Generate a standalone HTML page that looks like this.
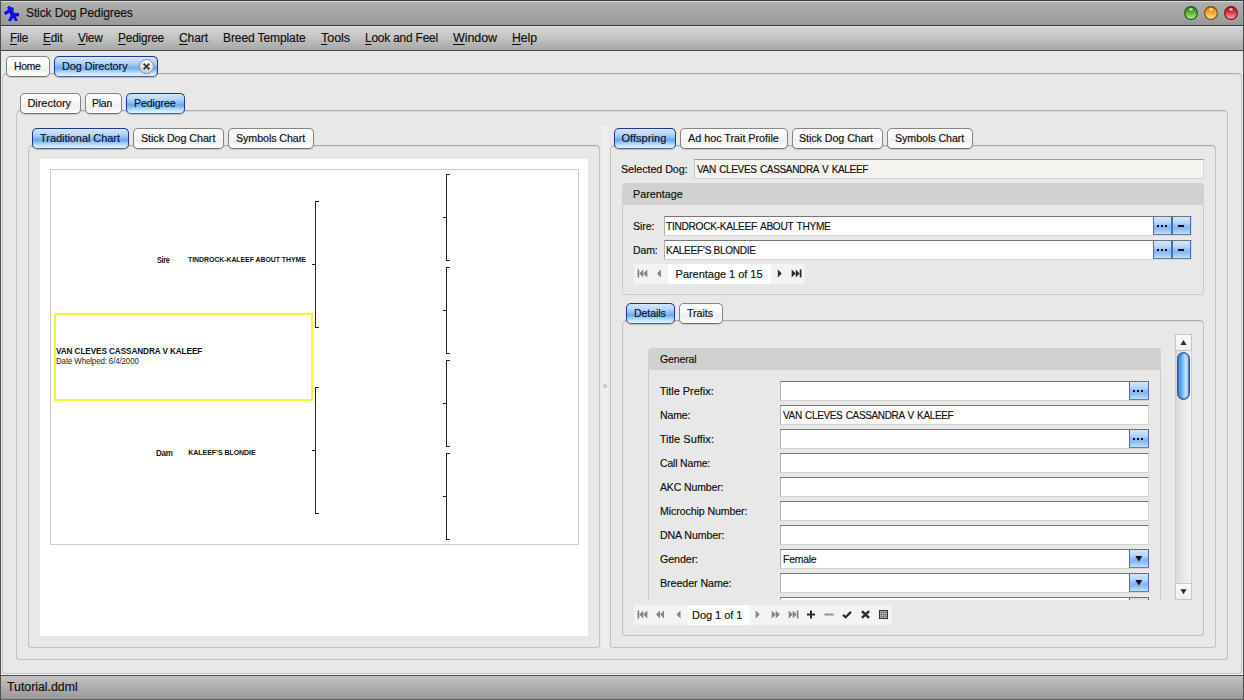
<!DOCTYPE html>
<html>
<head>
<meta charset="utf-8">
<title>Stick Dog Pedigrees</title>
<style>
*{box-sizing:border-box;margin:0;padding:0}
html,body{width:1244px;height:700px;overflow:hidden;background:#e8e8e8}
body{position:relative;font-family:"Liberation Sans",sans-serif;font-size:11px;color:#161616}
.a{position:absolute}
.t{position:absolute;white-space:nowrap;line-height:16px;height:16px;-webkit-text-stroke:0.17px currentColor}
.t u{text-decoration:underline;text-underline-offset:1.5px;text-decoration-thickness:1px}
#titlebar{left:0;top:0;width:1244px;height:26px;background:linear-gradient(#d8d8d8 0,#d8d8d8 1px,#aeaeae 1px,#a5a5a5 50%,#989898);border-top:1px solid #3c3c3c;border-bottom:1px solid #3a3a3a}
#menubar{left:0;top:26px;width:1244px;height:25px;background:linear-gradient(#e0e0e0 0,#e0e0e0 1px,#d2d2d2 1px,#c8c8c8 40%,#b4b4b4 75%,#a8a8a8);border-bottom:1px solid #484848}
#statusbar{left:0;top:675px;width:1244px;height:25px;background:linear-gradient(#c4c4c4,#adadad 50%,#989898);border-top:1px solid #4c4c4c;border-bottom:1px solid #606060}
#lb{left:0;top:0;width:1px;height:700px;background:#505050}
#rb{left:1243px;top:0;width:1px;height:700px;background:#505050}
.tab{position:absolute;height:21px;border:1px solid #858585;border-bottom-color:#6f6f6f;border-radius:5px;background:linear-gradient(#fefefe,#fafafa 40%,#efefef 58%,#f3f3f3 75%,#fdfdfd);box-shadow:0 1px 1px rgba(0,0,0,.14)}
.tab.sel{border-color:#20378a;border-bottom-color:#4f6488;background:radial-gradient(ellipse 60% 70% at 50% 50%,rgba(255,255,255,.22),rgba(255,255,255,0) 100%),linear-gradient(#cfe4fb 0%,#b4d5f8 25%,#86baf0 45%,#5fa1e9 58%,#88bff3 70%,#c0e3fc 86%,#dcf3ff 100%);box-shadow:0 1px 1px rgba(0,0,40,.2)}
.panel{position:absolute;border:1px solid #c3c3c3;border-top-color:#adadad;border-radius:5px 4px 3px 3px;background:#e8e8e8;box-shadow:inset 0 1px 0 #d9d9d9}
.field{position:absolute;height:20px;background:#fff;border:1px solid #d4d4d4;border-top-color:#767676;border-left-color:#b0b0b0}
.btn{position:absolute;width:19px;height:19px;border:1px solid #4c6eae;border-top-color:#727272;border-bottom-color:#667fa8;background:linear-gradient(#d3e7fb,#b5d5f7 35%,#84b5ee 58%,#8fc0f2 72%,#bfe0fa)}
.ghead{position:absolute;background:#d1d1d1;border-radius:4px 4px 0 0}
.nav{position:absolute;height:20px;background:#f3f3f3}
.navw{position:absolute;height:20px;background:#fff}
.bk{position:absolute;background:#242424}

</style>
</head>
<body>
<div id="titlebar" class="a"></div>
<div id="menubar" class="a"></div>

<!-- app icon (blue stick dog) -->
<svg class="a" style="left:0;top:0" width="24" height="26" viewBox="0 0 24 26">
 <path d="M8.1 6.4 L9.7 5.8 L10.6 7.4 L12.4 6.9 L13.7 8.2 L13.6 9.9 L13.2 11 L14.4 13 L19 13 L19.1 16.2 L15.7 16.4 L18 20.7 L14.9 20.9 L13 17.7 L11.4 21 L7.9 20.9 L10.6 15.4 L9.5 12.7 L5.6 14.9 L3.7 12.6 L8.2 9.6 L7.1 7.5 Z" fill="#1010ee"/>
</svg>

<!-- window buttons -->
<svg class="a" style="left:1180px;top:3px" width="62" height="20" viewBox="0 0 62 20">
 <defs>
  <linearGradient id="gg" x1="0" y1="0" x2="0" y2="1"><stop offset="0" stop-color="#2f7d1e"/><stop offset=".45" stop-color="#52b02f"/><stop offset="1" stop-color="#c2f59a"/></linearGradient>
  <linearGradient id="go" x1="0" y1="0" x2="0" y2="1"><stop offset="0" stop-color="#d9730f"/><stop offset=".45" stop-color="#f6a428"/><stop offset="1" stop-color="#ffe88e"/></linearGradient>
  <linearGradient id="gr" x1="0" y1="0" x2="0" y2="1"><stop offset="0" stop-color="#a9141f"/><stop offset=".45" stop-color="#dd3442"/><stop offset="1" stop-color="#ffb0b4"/></linearGradient>
  <radialGradient id="gl" cx="50%" cy="50%" r="50%"><stop offset="0" stop-color="#fff" stop-opacity=".95"/><stop offset="1" stop-color="#fff" stop-opacity="0"/></radialGradient>
 </defs>
 <circle cx="11" cy="10" r="6.4" fill="url(#gg)" stroke="#23541a" stroke-width="1.1"/><ellipse cx="11" cy="6.3" rx="2.6" ry="2" fill="url(#gl)"/>
 <circle cx="31" cy="10" r="6.4" fill="url(#go)" stroke="#7e4616" stroke-width="1.1"/><ellipse cx="31" cy="6.3" rx="2.6" ry="2" fill="url(#gl)"/>
 <circle cx="51" cy="10" r="6.4" fill="url(#gr)" stroke="#6c141c" stroke-width="1.1"/><ellipse cx="51" cy="6.3" rx="2.6" ry="2" fill="url(#gl)"/>
</svg>

<!-- LEVEL 1 panel + tabs -->
<div class="panel" style="left:2px;top:73px;width:1240px;height:601px"></div>
<div class="tab" style="left:6px;top:56px;width:44px"></div>
<div class="tab sel" style="left:54px;top:56px;width:104px"></div>
<svg class="a" style="left:138px;top:58px" width="17" height="17" viewBox="0 0 17 17">
 <defs><linearGradient id="cb" x1="0" y1="0" x2="0" y2="1"><stop offset="0" stop-color="#fafafa"/><stop offset="1" stop-color="#cfcfcf"/></linearGradient></defs>
 <circle cx="8.5" cy="8.5" r="7" fill="url(#cb)" stroke="#8c8c8c" stroke-width="1"/>
 <path d="M5.6 5.6 L11.4 11.4 M11.4 5.6 L5.6 11.4" stroke="#3a3a3a" stroke-width="1.9" stroke-linecap="butt"/>
</svg>

<!-- LEVEL 2 panel + tabs -->
<div class="panel" style="left:16px;top:110px;width:1212px;height:550px"></div>
<div class="tab" style="left:20px;top:93px;width:61px"></div>
<div class="tab" style="left:85px;top:93px;width:37px"></div>
<div class="tab sel" style="left:126px;top:93px;width:59px"></div>

<!-- LEFT panel -->
<div class="panel" style="left:28px;top:145px;width:572px;height:503px"></div>
<div class="tab sel" style="left:32px;top:128px;width:97px"></div>
<div class="tab" style="left:133px;top:128px;width:91px"></div>
<div class="tab" style="left:228px;top:128px;width:86px"></div>
<div class="a" style="left:40px;top:159px;width:548px;height:477px;background:#fff"></div>
<div class="a" style="left:50px;top:169px;width:529px;height:376px;border:1px solid #cdcdcd;background:#fff"></div>

<!-- chart: yellow box -->
<div class="a" style="left:54px;top:313px;width:259px;height:88px;border:2px solid #f3f33a"></div>
<!-- chart: brackets -->
<div class="bk" style="left:315px;top:201px;width:1px;height:127px"></div>
<div class="bk" style="left:315px;top:201px;width:4px;height:1px"></div>
<div class="bk" style="left:315px;top:327px;width:4px;height:1px"></div>
<div class="bk" style="left:312px;top:264px;width:3px;height:1px"></div>
<div class="bk" style="left:315px;top:387px;width:1px;height:127px"></div>
<div class="bk" style="left:315px;top:387px;width:4px;height:1px"></div>
<div class="bk" style="left:315px;top:513px;width:4px;height:1px"></div>
<div class="bk" style="left:312px;top:450px;width:3px;height:1px"></div>
<div class="bk" style="left:446px;top:174px;width:1px;height:87px"></div>
<div class="bk" style="left:446px;top:174px;width:4px;height:1px"></div>
<div class="bk" style="left:446px;top:260px;width:4px;height:1px"></div>
<div class="bk" style="left:443px;top:217px;width:3px;height:1px"></div>
<div class="bk" style="left:446px;top:267px;width:1px;height:87px"></div>
<div class="bk" style="left:446px;top:267px;width:4px;height:1px"></div>
<div class="bk" style="left:446px;top:353px;width:4px;height:1px"></div>
<div class="bk" style="left:443px;top:310px;width:3px;height:1px"></div>
<div class="bk" style="left:446px;top:360px;width:1px;height:87px"></div>
<div class="bk" style="left:446px;top:360px;width:4px;height:1px"></div>
<div class="bk" style="left:446px;top:446px;width:4px;height:1px"></div>
<div class="bk" style="left:443px;top:403px;width:3px;height:1px"></div>
<div class="bk" style="left:446px;top:453px;width:1px;height:87px"></div>
<div class="bk" style="left:446px;top:453px;width:4px;height:1px"></div>
<div class="bk" style="left:446px;top:539px;width:4px;height:1px"></div>
<div class="bk" style="left:443px;top:496px;width:3px;height:1px"></div>

<!-- splitter -->
<div class="a" style="left:600px;top:126px;width:10px;height:522px;background:linear-gradient(90deg,#e8e8e8,#f1f1f1 35%,#f1f1f1 55%,#e8e8e8)"></div>
<div class="a" style="left:603px;top:384px;width:4px;height:4px;border:1px solid #b4b4b4;border-radius:2px;background:#e6e6e6"></div>

<!-- RIGHT panel -->
<div class="panel" style="left:610px;top:145px;width:606px;height:503px"></div>
<div class="tab sel" style="left:614px;top:128px;width:62px"></div>
<div class="tab" style="left:680px;top:128px;width:108px"></div>
<div class="tab" style="left:792px;top:128px;width:91px"></div>
<div class="tab" style="left:887px;top:128px;width:86px"></div>

<!-- selected dog -->
<div class="field" style="left:694px;top:159px;width:510px;background:#f5f4f1;border-top-color:#9a9a9a;border-left-color:#c6c6c6"></div>

<!-- parentage group -->
<div class="panel" style="left:622px;top:183px;width:582px;height:112px;border-color:#cacaca"></div>
<div class="ghead" style="left:622px;top:183px;width:582px;height:22px"></div>
<div class="field" style="left:664px;top:216px;width:528px"></div>
<div class="field" style="left:664px;top:240px;width:528px"></div>
<div class="btn" style="left:1153px;top:216px;width:19px;border-right-width:1px"></div>
<div class="btn" style="left:1171px;top:216px;width:20px;border-left-width:2px"></div>
<div class="btn" style="left:1153px;top:240px;width:19px"></div>
<div class="btn" style="left:1171px;top:240px;width:20px;border-left-width:2px"></div>
<!-- dots / minus on buttons -->
<div class="a" style="left:1157px;top:225px;width:2px;height:2px;background:#111;box-shadow:4px 0 #111,8px 0 #111"></div>
<div class="a" style="left:1157px;top:249px;width:2px;height:2px;background:#111;box-shadow:4px 0 #111,8px 0 #111"></div>
<div class="a" style="left:1178px;top:225px;width:6px;height:2px;background:#111"></div>
<div class="a" style="left:1178px;top:249px;width:6px;height:2px;background:#111"></div>
<!-- parentage navigator -->
<div class="nav" style="left:634px;top:264px;width:171px"></div>
<div class="navw" style="left:668px;top:264px;width:103px"></div>
<svg class="a" style="left:0;top:0;pointer-events:none" width="1244" height="700"><rect x="637.55" y="269.5" width="1.7" height="8" fill="#848484"/><path d="M643.3000000000001 269.5 L639.3000000000001 273.5 L643.3000000000001 277.5 Z" fill="#848484"/><path d="M647.3000000000001 269.5 L643.3000000000001 273.5 L647.3000000000001 277.5 Z" fill="#848484"/><path d="M661.0 269.5 L657.0 273.5 L661.0 277.5 Z" fill="#848484"/><path d="M777.8 269.5 L781.8 273.5 L777.8 277.5 Z" fill="#2b2b2b"/><path d="M791.6999999999999 269.5 L795.6999999999999 273.5 L791.6999999999999 277.5 Z" fill="#2b2b2b"/><path d="M795.6999999999999 269.5 L799.6999999999999 273.5 L795.6999999999999 277.5 Z" fill="#2b2b2b"/><rect x="799.75" y="269.5" width="1.7" height="8" fill="#2b2b2b"/></svg>

<!-- details panel + tabs -->
<div class="panel" style="left:622px;top:320px;width:582px;height:316px"></div>
<div class="tab sel" style="left:626px;top:303px;width:49px"></div>
<div class="tab" style="left:679px;top:303px;width:44px"></div>

<!-- general group (clipped at y=600) -->
<div class="a" style="left:648px;top:348px;width:513px;height:252px;overflow:hidden">
 <div class="panel" style="left:0;top:0;width:513px;height:300px;border-color:#cacaca"></div>
 <div class="ghead" style="left:0;top:0;width:513px;height:22px"></div>
<div class="field" style="left:132px;top:33px;width:369px"></div>
<div class="btn" style="left:481px;top:33px;width:20px"></div>
<div class="a" style="left:485px;top:42px;width:2px;height:2px;background:#111;box-shadow:4px 0 #111,8px 0 #111"></div>
<div class="field" style="left:132px;top:57px;width:369px"></div>
<div class="field" style="left:132px;top:81px;width:369px"></div>
<div class="btn" style="left:481px;top:81px;width:20px"></div>
<div class="a" style="left:485px;top:90px;width:2px;height:2px;background:#111;box-shadow:4px 0 #111,8px 0 #111"></div>
<div class="field" style="left:132px;top:105px;width:369px"></div>
<div class="field" style="left:132px;top:129px;width:369px"></div>
<div class="field" style="left:132px;top:153px;width:369px"></div>
<div class="field" style="left:132px;top:177px;width:369px"></div>
<div class="field" style="left:132px;top:201px;width:369px"></div>
<div class="btn" style="left:481px;top:201px;width:20px"></div>
<svg class="a" style="left:481px;top:201px" width="20" height="19"><path d="M6.3 7 L13.3 7 L9.8 12.6 Z" fill="#141414"/></svg>
<div class="field" style="left:132px;top:225px;width:369px"></div>
<div class="btn" style="left:481px;top:225px;width:20px"></div>
<svg class="a" style="left:481px;top:225px" width="20" height="19"><path d="M6.3 7 L13.3 7 L9.8 12.6 Z" fill="#141414"/></svg>
<div class="field" style="left:132px;top:249px;width:369px"></div>
<div class="btn" style="left:481px;top:249px;width:20px"></div>
<svg class="a" style="left:481px;top:249px" width="20" height="19"><path d="M6.3 7 L13.3 7 L9.8 12.6 Z" fill="#141414"/></svg>
</div>

<!-- scrollbar -->
<div class="a" style="left:1175px;top:334px;width:17px;height:266px;border:1px solid #cfcfcf;background:linear-gradient(90deg,#dadada,#e6e6e6 40%,#f2f2f2)"></div>
<div class="a" style="left:1175px;top:334px;width:17px;height:17px;border:1px solid #c6c6c6;background:linear-gradient(#fafafa,#efefef)"></div>
<div class="a" style="left:1175px;top:583px;width:17px;height:17px;border:1px solid #c6c6c6;background:linear-gradient(#fafafa,#efefef)"></div>
<svg class="a" style="left:1175px;top:334px" width="17" height="17"><path d="M8.5 6 L11.6 11 L5.4 11 Z" fill="#2c2c2c"/></svg>
<svg class="a" style="left:1175px;top:583px" width="17" height="17"><path d="M8.5 11.2 L11.6 6.2 L5.4 6.2 Z" fill="#2c2c2c"/></svg>
<div class="a" style="left:1177px;top:352px;width:13px;height:48px;border:1px solid #2a50a8;border-radius:6.5px;box-shadow:inset 0 0 0 1px rgba(42,86,176,.55);background:linear-gradient(90deg,#4a8de0,#5fa1ea 28%,#a6d1f9 58%,#c4e3fd 72%,#79b4ef)"></div>

<!-- bottom navigator -->
<div class="nav" style="left:634px;top:605px;width:258px"></div>
<div class="navw" style="left:688px;top:605px;width:61px"></div>
<svg class="a" style="left:0;top:0;pointer-events:none" width="1244" height="700"><rect x="637.55" y="610.5" width="1.7" height="8" fill="#848484"/><path d="M643.3000000000001 610.5 L639.3000000000001 614.5 L643.3000000000001 618.5 Z" fill="#848484"/><path d="M647.3000000000001 610.5 L643.3000000000001 614.5 L647.3000000000001 618.5 Z" fill="#848484"/><path d="M660.0 610.5 L656.0 614.5 L660.0 618.5 Z" fill="#848484"/><path d="M664.0 610.5 L660.0 614.5 L664.0 618.5 Z" fill="#848484"/><path d="M680.5 610.5 L676.5 614.5 L680.5 618.5 Z" fill="#848484"/><path d="M755.7 610.5 L759.7 614.5 L755.7 618.5 Z" fill="#848484"/><path d="M771.7 610.5 L775.7 614.5 L771.7 618.5 Z" fill="#848484"/><path d="M775.7 610.5 L779.7 614.5 L775.7 618.5 Z" fill="#848484"/><path d="M788.6999999999999 610.5 L792.6999999999999 614.5 L788.6999999999999 618.5 Z" fill="#848484"/><path d="M792.6999999999999 610.5 L796.6999999999999 614.5 L792.6999999999999 618.5 Z" fill="#848484"/><rect x="796.75" y="610.5" width="1.7" height="8" fill="#848484"/><path d="M807 614.5 H815 M811 610.5 V618.5" stroke="#2b2b2b" stroke-width="2" fill="none"/><path d="M824.5 614.5 H833.5" stroke="#8e8e8e" stroke-width="2" fill="none"/><path d="M843 614.9 L845.6 617.3 L851 611.9" stroke="#2b2b2b" stroke-width="2.2" fill="none"/><path d="M861.9 611.1 L869.1 617.9 M869.1 611.1 L861.9 617.9" stroke="#2b2b2b" stroke-width="2.4" fill="none"/><rect x="879.5" y="610.5" width="8" height="8" fill="#bdbdbd" stroke="#2b2b2b" stroke-width="1"/><path d="M881.5 610.5 V618.5 M879.5 612.5 H887.5" stroke="#6a6a6a" stroke-width=".6"/><path d="M883.5 610.5 V618.5 M879.5 614.5 H887.5" stroke="#6a6a6a" stroke-width=".6"/><path d="M885.5 610.5 V618.5 M879.5 616.5 H887.5" stroke="#6a6a6a" stroke-width=".6"/></svg>

<div class="a" style="left:1px;top:674px;width:1242px;height:1px;background:#f6f6f6"></div>
<div id="statusbar" class="a"></div>
<div id="lb" class="a"></div><div id="rb" class="a"></div>

<!-- text layer -->
<div class="t" style="left:26.40px;top:5.00px;font-size:12.5px;letter-spacing:-0.126px;color:#101010;transform:scaleX(0.9623);transform-origin:0 0;">Stick Dog Pedigrees</div>
<div class="t" style="left:10.00px;top:30.00px;font-size:12.5px;letter-spacing:-0.203px;color:#101010;transform:scaleX(0.9305);transform-origin:0 0;"><u>F</u>ile</div>
<div class="t" style="left:43.00px;top:30.00px;font-size:12.5px;letter-spacing:-0.191px;color:#101010;transform:scaleX(0.9383);transform-origin:0 0;"><u>E</u>dit</div>
<div class="t" style="left:78.00px;top:30.00px;font-size:12.5px;letter-spacing:-0.222px;color:#101010;transform:scaleX(0.9422);transform-origin:0 0;"><u>V</u>iew</div>
<div class="t" style="left:118.00px;top:30.00px;font-size:12.5px;letter-spacing:-0.187px;color:#101010;transform:scaleX(0.9474);transform-origin:0 0;"><u>P</u>edigree</div>
<div class="t" style="left:179.00px;top:30.00px;font-size:12.5px;letter-spacing:-0.114px;color:#101010;transform:scaleX(0.9665);transform-origin:0 0;"><u>C</u>hart</div>
<div class="t" style="left:223.00px;top:30.00px;font-size:12.5px;letter-spacing:-0.125px;color:#101010;transform:scaleX(0.9641);transform-origin:0 0;">Breed Template</div>
<div class="t" style="left:321.00px;top:30.00px;font-size:12.5px;letter-spacing:-0.037px;color:#101010;"><u>T</u>ools</div>
<div class="t" style="left:365.00px;top:30.00px;font-size:12.5px;letter-spacing:-0.177px;color:#101010;transform:scaleX(0.9489);transform-origin:0 0;"><u>L</u>ook and Feel</div>
<div class="t" style="left:453.00px;top:30.00px;font-size:12.5px;letter-spacing:-0.081px;color:#101010;"><u>W</u>indow</div>
<div class="t" style="left:512.00px;top:30.00px;font-size:12.5px;letter-spacing:-0.064px;color:#101010;transform:scaleX(0.9818);transform-origin:0 0;"><u>H</u>elp</div>
<div class="t" style="left:7.10px;top:679.00px;font-size:12.5px;letter-spacing:-0.030px;color:#101010;transform:scaleX(0.9901);transform-origin:0 0;">Tutorial.ddml</div>
<div class="t" style="left:13.50px;top:58.00px;font-size:11px;letter-spacing:-0.256px;color:#101010;transform:scaleX(0.9392);transform-origin:0 0;">Home</div>
<div class="t" style="left:61.50px;top:58.00px;font-size:11px;letter-spacing:-0.048px;color:#0a1430;transform:scaleX(0.9831);transform-origin:0 0;">Dog Directory</div>
<div class="t" style="left:27.40px;top:95.00px;font-size:11px;letter-spacing:-0.035px;color:#101010;">Directory</div>
<div class="t" style="left:92.30px;top:95.00px;font-size:11px;letter-spacing:-0.189px;color:#101010;transform:scaleX(0.9401);transform-origin:0 0;">Plan</div>
<div class="t" style="left:133.60px;top:95.00px;font-size:11px;letter-spacing:-0.111px;color:#0a1430;transform:scaleX(0.9639);transform-origin:0 0;">Pedigree</div>
<div class="t" style="left:40.10px;top:130.00px;font-size:11px;letter-spacing:-0.065px;color:#0a1430;">Traditional Chart</div>
<div class="t" style="left:140.50px;top:130.00px;font-size:11px;letter-spacing:-0.065px;color:#101010;transform:scaleX(0.9770);transform-origin:0 0;">Stick Dog Chart</div>
<div class="t" style="left:235.70px;top:130.00px;font-size:11px;letter-spacing:-0.084px;color:#101010;transform:scaleX(0.9726);transform-origin:0 0;">Symbols Chart</div>
<div class="t" style="left:621.40px;top:130.00px;font-size:11px;letter-spacing:0.062px;color:#0a1430;">Offspring</div>
<div class="t" style="left:687.50px;top:130.00px;font-size:11px;letter-spacing:-0.038px;color:#101010;transform:scaleX(0.9851);transform-origin:0 0;">Ad hoc Trait Profile</div>
<div class="t" style="left:799.40px;top:130.00px;font-size:11px;letter-spacing:-0.073px;color:#101010;transform:scaleX(0.9744);transform-origin:0 0;">Stick Dog Chart</div>
<div class="t" style="left:894.50px;top:130.00px;font-size:11px;letter-spacing:-0.081px;color:#101010;transform:scaleX(0.9735);transform-origin:0 0;">Symbols Chart</div>
<div class="t" style="left:633.60px;top:305.00px;font-size:11px;letter-spacing:-0.105px;color:#0a1430;transform:scaleX(0.9609);transform-origin:0 0;">Details</div>
<div class="t" style="left:687.30px;top:305.00px;font-size:11px;letter-spacing:-0.059px;color:#101010;transform:scaleX(0.9762);transform-origin:0 0;">Traits</div>
<div class="t" style="left:621.40px;top:161.00px;font-size:11px;letter-spacing:-0.069px;color:#101010;transform:scaleX(0.9764);transform-origin:0 0;">Selected Dog:</div>
<div class="t" style="left:696.50px;top:161.00px;font-size:11px;letter-spacing:-0.369px;color:#101010;transform:scaleX(0.9091);transform-origin:0 0;word-spacing:1px;">VAN CLEVES CASSANDRA V KALEEF</div>
<div class="t" style="left:633.40px;top:186.00px;font-size:11px;letter-spacing:-0.042px;color:#101010;transform:scaleX(0.9864);transform-origin:0 0;">Parentage</div>
<div class="t" style="left:633.40px;top:218.00px;font-size:11px;letter-spacing:-0.089px;color:#101010;transform:scaleX(0.9648);transform-origin:0 0;">Sire:</div>
<div class="t" style="left:666.40px;top:218.00px;font-size:11px;letter-spacing:-0.312px;color:#101010;transform:scaleX(0.9228);transform-origin:0 0;word-spacing:1px;">TINDROCK-KALEEF ABOUT THYME</div>
<div class="t" style="left:633.40px;top:242.00px;font-size:11px;letter-spacing:-0.163px;color:#101010;transform:scaleX(0.9559);transform-origin:0 0;">Dam:</div>
<div class="t" style="left:666.40px;top:242.00px;font-size:11px;letter-spacing:-0.326px;color:#101010;transform:scaleX(0.9143);transform-origin:0 0;">KALEEF&rsquo;S BLONDIE</div>
<div class="t" style="left:675.60px;top:266.00px;font-size:11px;letter-spacing:-0.033px;color:#101010;">Parentage 1 of 15</div>
<div class="t" style="left:659.80px;top:351.00px;font-size:11px;letter-spacing:-0.138px;color:#101010;transform:scaleX(0.9561);transform-origin:0 0;">General</div>
<div class="t" style="left:659.70px;top:383.00px;font-size:11px;letter-spacing:-0.047px;color:#101010;">Title Prefix:</div>
<div class="t" style="left:659.70px;top:407.00px;font-size:11px;letter-spacing:-0.154px;color:#101010;transform:scaleX(0.9578);transform-origin:0 0;">Name:</div>
<div class="t" style="left:659.70px;top:431.00px;font-size:11px;letter-spacing:0.039px;color:#101010;">Title Suffix:</div>
<div class="t" style="left:659.70px;top:455.00px;font-size:11px;letter-spacing:-0.159px;color:#101010;transform:scaleX(0.9486);transform-origin:0 0;">Call Name:</div>
<div class="t" style="left:659.70px;top:479.00px;font-size:11px;letter-spacing:-0.152px;color:#101010;transform:scaleX(0.9563);transform-origin:0 0;">AKC Number:</div>
<div class="t" style="left:659.70px;top:503.00px;font-size:11px;letter-spacing:-0.105px;color:#101010;transform:scaleX(0.9654);transform-origin:0 0;">Microchip Number:</div>
<div class="t" style="left:659.70px;top:527.00px;font-size:11px;letter-spacing:-0.117px;color:#101010;transform:scaleX(0.9659);transform-origin:0 0;">DNA Number:</div>
<div class="t" style="left:659.70px;top:551.00px;font-size:11px;letter-spacing:-0.090px;color:#101010;transform:scaleX(0.9714);transform-origin:0 0;">Gender:</div>
<div class="t" style="left:659.70px;top:575.00px;font-size:11px;letter-spacing:-0.086px;color:#101010;transform:scaleX(0.9730);transform-origin:0 0;">Breeder Name:</div>
<div class="t" style="left:782.60px;top:407.00px;font-size:11px;letter-spacing:-0.379px;color:#101010;transform:scaleX(0.9068);transform-origin:0 0;word-spacing:1px;">VAN CLEVES CASSANDRA V KALEEF</div>
<div class="t" style="left:782.60px;top:551.00px;font-size:11px;letter-spacing:-0.204px;color:#101010;transform:scaleX(0.9418);transform-origin:0 0;">Female</div>
<div class="t" style="left:692.10px;top:607.00px;font-size:11px;letter-spacing:-0.057px;color:#101010;">Dog 1 of 1</div>
<div class="t" style="left:157.20px;top:252.00px;font-size:8.6px;letter-spacing:-0.374px;color:#151515;font-weight:700;transform:scaleX(0.8540);transform-origin:0 0;-webkit-text-stroke:0;">Sire</div>
<div class="t" style="left:188.30px;top:251.50px;font-size:7px;letter-spacing:-0.033px;color:#111;font-weight:700;transform:scaleX(0.9865);transform-origin:0 0;-webkit-text-stroke:0;">TINDROCK-KALEEF ABOUT THYME</div>
<div class="t" style="left:56.40px;top:343.00px;font-size:8.5px;letter-spacing:-0.103px;color:#111;font-weight:700;transform:scaleX(0.9653);transform-origin:0 0;-webkit-text-stroke:0;">VAN CLEVES CASSANDRA V KALEEF</div>
<div class="t" style="left:56.40px;top:353.00px;font-size:8.4px;letter-spacing:-0.128px;color:#1c1c1c;transform:scaleX(0.9451);transform-origin:0 0;-webkit-text-stroke:0;">Date Whelped: 6/4/2000</div>
<div class="t" style="left:156.20px;top:445.00px;font-size:8.6px;letter-spacing:-0.229px;color:#151515;font-weight:700;transform:scaleX(0.9358);transform-origin:0 0;-webkit-text-stroke:0;">Dam</div>
<div class="t" style="left:188.30px;top:444.50px;font-size:7px;letter-spacing:-0.048px;color:#111;font-weight:700;-webkit-text-stroke:0;">KALEEF&rsquo;S BLONDIE</div>
</body>
</html>
